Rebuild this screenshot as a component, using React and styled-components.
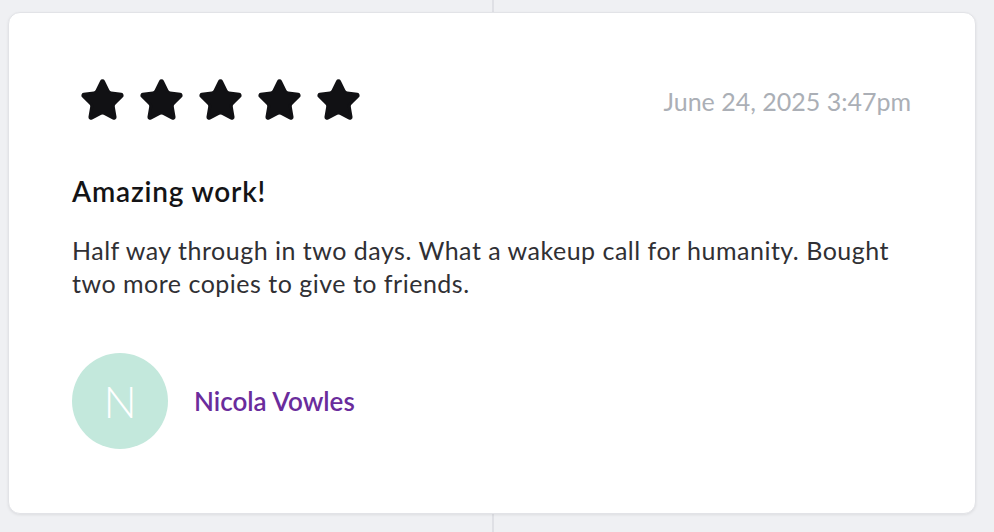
import React from 'react';
import styled, { createGlobalStyle } from 'styled-components';

const GlobalStyle = createGlobalStyle`
  html, body {
    margin: 0;
    padding: 0;
  }
  body {
    width: 994px;
    height: 532px;
    overflow: hidden;
    font-family: Lato, "Open Sans", sans-serif;
    background: linear-gradient(to right, transparent 492px, #dfe0e5 492px, #dfe0e5 494px, transparent 494px), #eff0f3;
  }
`;

const Page = styled.main`
  padding: 12px 18px 18px 8px;
`;

const Card = styled.article`
  height: 502px;
  box-sizing: border-box;
  background: #fff;
  border-radius: 12px;
  border: 1px solid #e2e3e7;
  box-shadow: 0 1px 3px rgba(0, 0, 0, 0.08);
  padding: 58px 64px 0 63px;
  display: flex;
  flex-direction: column;
`;

const Header = styled.header`
  display: flex;
  justify-content: space-between;
  align-items: center;
  height: 58px;
`;

const Stars = styled.div`
  display: flex;
  gap: 12px;
  margin-left: 7px;
`;

const DateText = styled.time`
  font-size: 25px;
  color: #abafb6;
  margin-top: 2px;
`;

const Title = styled.h2`
  margin: 45px 0 0;
  font-size: 28px;
  line-height: 34px;
  font-weight: 600;
  letter-spacing: 0.8px;
  color: #141416;
`;

const Body = styled.p`
  margin: 26px 0 0;
  max-width: 840px;
  font-size: 25px;
  line-height: 33px;
  letter-spacing: 0.5px;
  color: #303034;
`;

const Author = styled.div`
  display: flex;
  align-items: center;
  gap: 26px;
  margin-top: 53px;
`;

const Avatar = styled.div`
  width: 96px;
  height: 96px;
  border-radius: 50%;
  background: ${(p) => p.color};
  color: #fff;
  font-size: 44px;
  font-weight: 300;
  display: flex;
  align-items: center;
  justify-content: center;
`;

const Name = styled.span`
  font-size: 26px;
  font-weight: 600;
  color: #6a2c9c;
`;

const Star = () => (
  <svg width="47" height="47" viewBox="0 0 24 24" fill="#111114" stroke="#111114" strokeWidth="1.6" strokeLinejoin="round">
    <path d="M11.525 2.295a.53.53 0 0 1 .95 0l2.31 4.679a2.123 2.123 0 0 0 1.595 1.16l5.166.756a.53.53 0 0 1 .294.904l-3.736 3.638a2.123 2.123 0 0 0-.611 1.878l.882 5.14a.53.53 0 0 1-.771.56l-4.618-2.428a2.122 2.122 0 0 0-1.973 0L6.396 21.01a.53.53 0 0 1-.77-.56l.881-5.139a2.122 2.122 0 0 0-.611-1.879L2.16 9.795a.53.53 0 0 1 .294-.906l5.165-.755a2.122 2.122 0 0 0 1.597-1.16z" />
  </svg>
);

export default function App() {
  return (
    <>
      <GlobalStyle />
      <Page>
        <Card>
          <Header>
            <Stars>
              {[0, 1, 2, 3, 4].map((i) => (
                <Star key={i} />
              ))}
            </Stars>
            <DateText>June 24, 2025 3:47pm</DateText>
          </Header>
          <Title>Amazing work!</Title>
          <Body>
            Half way through in two days. What a wakeup call for humanity. Bought two more copies to give to friends.
          </Body>
          <Author>
            <Avatar color="#c3e8dc">N</Avatar>
            <Name>Nicola Vowles</Name>
          </Author>
        </Card>
      </Page>
    </>
  );
}
